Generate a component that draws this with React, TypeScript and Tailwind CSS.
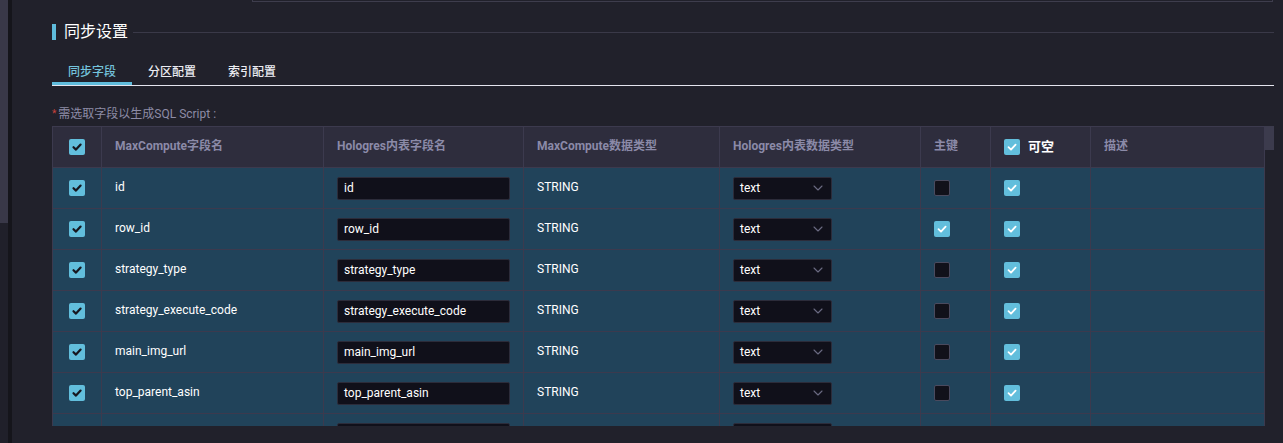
import { ChevronDown } from "lucide-react";

const cols = "grid grid-cols-[49px_222px_200px_196px_201px_70px_100px_174px]";
const cell = "flex items-center border-r border-[#3c3a4e] px-[13px]";

interface Field {
  name: string;
  pk: boolean;
}

// last row is only partly in view, its texts are below the fold
const fields: Field[] = [
  { name: "id", pk: false },
  { name: "row_id", pk: true },
  { name: "strategy_type", pk: false },
  { name: "strategy_execute_code", pk: false },
  { name: "main_img_url", pk: false },
  { name: "top_parent_asin", pk: false },
  { name: "", pk: false },
];

function Check({ on, dark = false }: { on: boolean; dark?: boolean }) {
  if (!on) {
    return (
      <span className="block h-4 w-4 rounded-[2px] border border-[#4a4a5e] bg-[#11111a]" />
    );
  }
  return (
    <span className="flex h-4 w-4 items-center justify-center rounded-[2px] bg-[#62bedc]">
      <svg width="12" height="12" viewBox="0 0 12 12">
        <polyline
          points="2.5,6.2 5,8.6 9.6,3.6"
          fill="none"
          stroke={dark ? "#17171f" : "#ffffff"}
          strokeWidth={dark ? 2.2 : 1.8}
          strokeLinecap="round"
          strokeLinejoin="round"
        />
      </svg>
    </span>
  );
}

function FieldRow({ field }: { field: Field }) {
  return (
    <div className={`${cols} h-[41px] border-b border-[#3c3a4e] bg-[#21435a] text-[12px] text-white`}>
      <div className={`${cell} justify-center px-0`}>
        <Check on dark />
      </div>
      <div className={`${cell} pb-[2px]`}>{field.name}</div>
      <div className={cell}>
        <div className="flex h-[23px] w-[174px] items-center rounded-[2px] border border-[#2c2c3a] bg-[#10101a] px-[6px]">
          {field.name}
        </div>
      </div>
      <div className={`${cell} pb-[2px]`}>{field.name && "STRING"}</div>
      <div className={cell}>
        <div className="flex h-[23px] w-[99px] items-center justify-between rounded-[2px] border border-[#2c2c3a] bg-[#10101a] pl-[6px] pr-[5px]">
          <span>{field.name && "text"}</span>
          <ChevronDown className="h-4 w-4 text-[#6b6b82]" strokeWidth={1.6} />
        </div>
      </div>
      <div className={`${cell} px-[12px]`}>
        <Check on={field.pk} />
      </div>
      <div className={`${cell} px-[12px]`}>
        <Check on />
      </div>
      <div className={cell} />
    </div>
  );
}

export default function App() {
  return (
    <div
      className="flex h-[443px] w-[1283px] overflow-hidden bg-[#21212b]"
      style={{ fontFamily: 'Roboto, "Noto Sans CJK SC", sans-serif' }}
    >
      <div className="flex w-2 flex-col">
        <div className="h-[223px] bg-[#393848]" />
        <div className="flex-1 bg-[#20202a]" />
      </div>
      <div className="w-1 bg-[#15151b]" />

      <div className="flex flex-1 flex-col pl-10 pr-[9px]">
        <div className="ml-[200px] mr-px h-[2px] border-x border-b border-[#3e3d4d]" />

        <div className="mt-[22px] flex h-4 items-center">
          <span className="h-4 w-1 bg-[#5fbcdc]" />
          <span className="ml-2 text-[16px] leading-4 text-white">同步设置</span>
          <span className="ml-[5px] h-px flex-1 bg-[#3a3948]" />
        </div>

        <div className="mt-[22px] flex border-b border-[#e4e4ee]">
          <div className="w-20 border-b-[3px] border-[#5fbcdc] pb-[2px] pt-[2px] text-center text-[12px] font-medium leading-4 text-[#74c3dc]">
            同步字段
          </div>
          <div className="w-20 border-b-[3px] border-transparent pb-[2px] pt-[2px] text-center text-[12px] font-medium leading-4 text-[#ececf2]">
            分区配置
          </div>
          <div className="w-20 border-b-[3px] border-transparent pb-[2px] pt-[2px] text-center text-[12px] font-medium leading-4 text-[#ececf2]">
            索引配置
          </div>
        </div>

        <div className="mt-5 flex items-center text-[12px] leading-4 text-[#8d8ca6]">
          <span className="mr-[2px] text-[10px] text-[#c8413b]">*</span>
          需选取字段以生成SQL Script :
        </div>

        <div className="mt-1 flex h-[300px]">
          <div className="h-[300px] w-[1213px] overflow-hidden border-l border-t border-[#3c3a4e]">
            <div className={`${cols} h-[41px] border-b border-[#3c3a4e] bg-[#2e2d3d] text-[12px] font-bold text-[#8b8aa8]`}>
              <div className={`${cell} justify-center px-0`}>
                <Check on dark />
              </div>
              <div className={`${cell} pb-[2px]`}>MaxCompute字段名</div>
              <div className={`${cell} pb-[2px]`}>Hologres内表字段名</div>
              <div className={`${cell} pb-[2px]`}>MaxCompute数据类型</div>
              <div className={`${cell} pb-[2px]`}>Hologres内表数据类型</div>
              <div className={`${cell} px-[12px] pb-[2px]`}>主键</div>
              <div className={`${cell} gap-2 px-[12px]`}>
                <Check on />
                <span className="text-[13px] text-white">可空</span>
              </div>
              <div className={`${cell} pb-[2px]`}>描述</div>
            </div>
            {fields.map((f, i) => (
              <FieldRow key={i} field={f} />
            ))}
          </div>
          <div className="w-[9px]">
            <div className="h-6 bg-[#3c3b4d]" />
          </div>
        </div>
      </div>
    </div>
  );
}
